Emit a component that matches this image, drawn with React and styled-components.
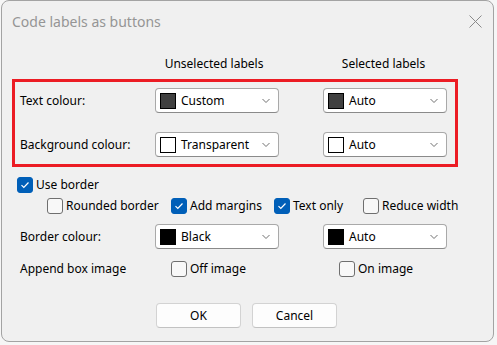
import React from "react";
import styled, { createGlobalStyle } from "styled-components";

const Global = createGlobalStyle`
  html, body { margin: 0; padding: 0; }
  body {
    background: #f6f6f6;
    font-family: "Segoe UI", "Noto Sans", "Open Sans", sans-serif;
    font-size: 12px;
    color: #000;
  }
`;

const Page = styled.div`
  width: 497px;
  height: 345px;
  padding-left: 1px;
  box-sizing: border-box;
`;

const Dialog = styled.div`
  width: 493px;
  height: 342px;
  box-sizing: border-box;
  border: 1px solid #a3a3a3;
  border-radius: 8px;
  background: #f0f0f0;
  overflow: hidden;
  display: flex;
  flex-direction: column;
`;

const TitleBar = styled.div`
  height: 40px;
  display: flex;
  align-items: center;
  justify-content: space-between;
  padding-left: 10px;
  flex-shrink: 0;
`;

const Title = styled.div`
  font-size: 14px;
  color: #959595;
`;

const CloseBox = styled.div`
  width: 36px;
  height: 40px;
  display: flex;
  align-items: center;
  justify-content: center;
`;

const Content = styled.div`
  padding-left: 10px;
  display: flex;
  flex-direction: column;
`;

const Columns = styled.div`
  display: grid;
  grid-template-columns: 135px 124px 44px 124px;
  align-items: center;
`;

const HeaderRow = styled(Columns)`
  padding-left: 8px;
  padding-top: 15px;
  height: 16px;
  margin-bottom: 7px;
`;

const ColHead = styled.div`
  grid-column: ${(p) => p.$col};
  text-align: center;
  margin-left: ${(p) => p.$shift || 0}px;
  white-space: nowrap;
  line-height: 16px;
`;

const Highlight = styled.div`
  width: 446px;
  box-sizing: border-box;
  border: 3px solid #ec1c24;
  padding: 6px 0 7px 5px;
  display: flex;
  flex-direction: column;
  gap: 19px;
`;

const FieldRow = styled(Columns)`
  height: 25px;
  padding-left: ${(p) => p.$pad || 0}px;
  margin-top: ${(p) => p.$mt || 0}px;
`;

const Label = styled.div`
  white-space: nowrap;
`;

const Combo = styled.div`
  grid-column: ${(p) => p.$col};
  height: 25px;
  box-sizing: border-box;
  background: #fff;
  border: 1px solid #a9a9a9;
  border-bottom-color: #8a8a8a;
  border-radius: 4px;
  display: flex;
  align-items: center;
  padding: 0 7px 0 4px;
`;

const Swatch = styled.span`
  width: 16px;
  height: 16px;
  box-sizing: border-box;
  border: 1px solid #000;
  background: ${(p) => p.$color};
  flex-shrink: 0;
`;

const ComboText = styled.span`
  margin-left: 5px;
  flex: 1;
  white-space: nowrap;
`;

const CheckRow = styled.div`
  display: grid;
  grid-template-columns: ${(p) => p.$cols};
  align-items: center;
  height: 16px;
  margin-top: ${(p) => p.$mt}px;
  padding-left: ${(p) => p.$pad}px;
`;

const CheckItem = styled.label`
  display: flex;
  align-items: center;
  gap: 3px;
  white-space: nowrap;
  grid-column: ${(p) => p.$col || "auto"};
`;

const Box = styled.span`
  width: 16px;
  height: 16px;
  box-sizing: border-box;
  border-radius: 3px;
  flex-shrink: 0;
  display: flex;
  align-items: center;
  justify-content: center;
  background: ${(p) => (p.$on ? "#005fb8" : "#f8f8f8")};
  border: 1px solid ${(p) => (p.$on ? "#005fb8" : "#6f6f6f")};
`;

const Buttons = styled.div`
  display: flex;
  gap: 11px;
  margin-top: 27px;
  padding-left: 144px;
`;

const Button = styled.div`
  width: 85px;
  height: 25px;
  box-sizing: border-box;
  background: #fdfdfd;
  border: 1px solid #d3d3d3;
  border-bottom-color: #c2c2c2;
  border-radius: 4px;
  display: flex;
  align-items: center;
  justify-content: center;
`;

const Chevron = () => (
  <svg width="10" height="6" viewBox="0 0 10 6">
    <path d="M1.5 1 L5 4.5 L8.5 1" fill="none" stroke="#707070" strokeWidth="1" />
  </svg>
);

const Tick = () => (
  <svg width="10" height="8" viewBox="0 0 10 8">
    <path d="M1.5 4.2 L3.8 6.5 L8.5 1.5" fill="none" stroke="#fff" strokeWidth="1.2" />
  </svg>
);

const Check = ({ on, children, col }) => (
  <CheckItem $col={col}>
    <Box $on={on}>{on && <Tick />}</Box>
    {children}
  </CheckItem>
);

const Select = ({ col, color, text }) => (
  <Combo $col={col}>
    <Swatch $color={color} />
    <ComboText>{text}</ComboText>
    <Chevron />
  </Combo>
);

export default function App() {
  return (
    <Page>
      <Global />
      <Dialog>
        <TitleBar>
          <Title>Code labels as buttons</Title>
          <CloseBox>
            <svg width="13" height="13" viewBox="0 0 13 13">
              <path d="M0.5 0.5 L12.5 12.5 M12.5 0.5 L0.5 12.5" stroke="#8a8a8a" strokeWidth="1" />
            </svg>
          </CloseBox>
        </TitleBar>
        <Content>
          <HeaderRow>
            <ColHead $col={2} $shift={-6}>Unselected labels</ColHead>
            <ColHead $col={4} $shift={-3}>Selected labels</ColHead>
          </HeaderRow>
          <Highlight>
            <FieldRow>
              <Label>Text colour:</Label>
              <Select col={2} color="#404040" text="Custom" />
              <Select col={4} color="#404040" text="Auto" />
            </FieldRow>
            <FieldRow>
              <Label>Background colour:</Label>
              <Select col={2} color="#ffffff" text="Transparent" />
              <Select col={4} color="#ffffff" text="Auto" />
            </FieldRow>
          </Highlight>
          <CheckRow $cols="auto" $mt={9} $pad={5}>
            <Check on>Use border</Check>
          </CheckRow>
          <CheckRow $cols="124px 103px 89px auto" $mt={5} $pad={35}>
            <Check>Rounded border</Check>
            <Check on>Add margins</Check>
            <Check on>Text only</Check>
            <Check>Reduce width</Check>
          </CheckRow>
          <FieldRow $pad={8} $mt={11}>
            <Label>Border colour:</Label>
            <Select col={2} color="#000000" text="Black" />
            <Select col={4} color="#000000" text="Auto" />
          </FieldRow>
          <CheckRow $cols="151px 168px auto" $mt={11} $pad={8}>
            <Label>Append box image</Label>
            <Check>Off image</Check>
            <Check>On image</Check>
          </CheckRow>
          <Buttons>
            <Button>OK</Button>
            <Button>Cancel</Button>
          </Buttons>
        </Content>
      </Dialog>
    </Page>
  );
}
